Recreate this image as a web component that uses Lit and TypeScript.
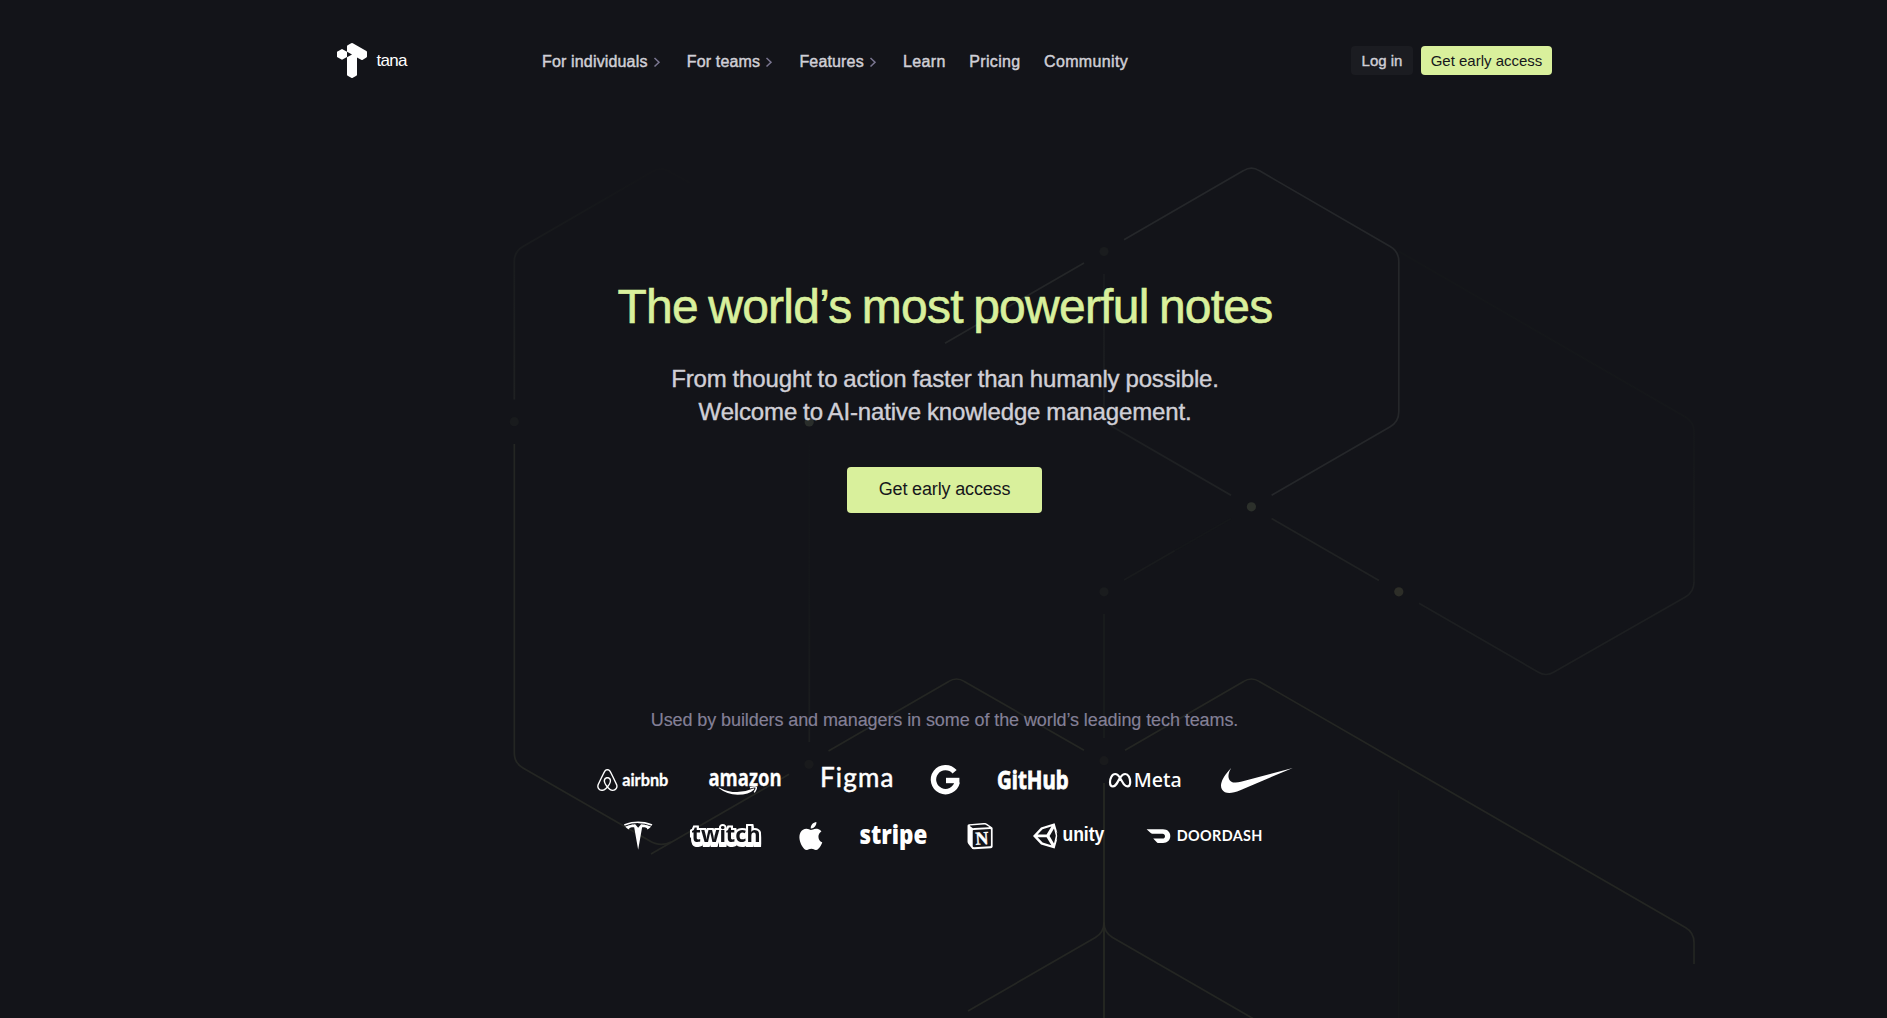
import { LitElement, html, css, svg } from "lit";
import { customElement } from "lit/decorators.js";

/** Faint honeycomb of lines and nodes behind the hero. */
@customElement("hex-backdrop")
class HexBackdrop extends LitElement {
  static styles = css`
    :host { position: absolute; inset: 0; display: block; overflow: hidden; pointer-events: none; }
    svg { display: block; width: 1887px; height: 1018px; }
    .l { fill: none; stroke-width: 1.7; }
  `;

  private lines: [string, string][] = [
    ["#25272a", "M1124 239.8L1243.6 170.6Q1251.4 165.8 1259.2 170.6L1390.2 246.5Q1398.8 251.5 1398.8 261.5V411.7Q1398.8 421.7 1390.2 426.7L1271.6 495.2"],
    ["#242628", "M1084 263L945 343.2"],
    ["#202223", "M1271.6 518.4L1379 580.4"],
    ["#1d1f21", "M1419 603.3L1538 672Q1546 677 1554 672L1685.4 597Q1694 592 1694 582"],
    ["#242623", "M1125 750.3L1243.6 681.4Q1251.4 676.6 1259.2 681.4L1685.4 927.5Q1694 932.5 1694 942.5V964"],
    ["#242623", "M828.5 751L948.7 681.4Q956.5 676.6 964.3 681.4L1084 750.3"],
    ["#242623", "M514.3 444V753Q514.3 763 523 768L649 840.5Q660 847.5 671 842"],
    ["#242623", "M651 854L789 774.3"],
    ["#242623", "M968 1011L1095.4 937.5Q1104 932.5 1104 922.5"],
    ["#242623", "M1104 922.5Q1104 932.5 1112.6 937.5L1253 1018.5"],
    ["#282a24", "M1104 783V1018"],
    ["#1b1d1e", "M1104 614V738"],
    ["#191b1d", "M1124 580L1175 550.6"],
    ["#15171a", "M1175 550.6L1231 518.5"],
  ];

  private nodes: [number, number, string][] = [
    [1104, 251.5, "#1a1c1e"], [514.3, 421.7, "#191b1d"], [809.2, 422, "#2a2e2b"],
    [1251.4, 506.8, "#2c302b"], [1398.8, 591.8, "#2d2e28"], [1104, 591.8, "#1a1c1e"],
    [809, 764.3, "#191a1c"], [1104, 760.7, "#191a1c"],
  ];

  render() {
    return html`<svg viewBox="0 0 1887 1018">
      <defs>
        <linearGradient id="a" gradientUnits="userSpaceOnUse" x1="1104" y1="274" x2="1231" y2="495">
          <stop offset="0" stop-color="#191b1e"/><stop offset="1" stop-color="#202224"/>
        </linearGradient>
        <linearGradient id="b" gradientUnits="userSpaceOnUse" x1="514" y1="400" x2="670" y2="196">
          <stop offset="0" stop-color="#1f2122"/><stop offset=".85" stop-color="#15171a"/><stop offset="1" stop-color="#141519"/>
        </linearGradient>
        <linearGradient id="c" gradientUnits="userSpaceOnUse" x1="0" y1="578" x2="0" y2="251">
          <stop offset="0" stop-color="#1a1c1e"/><stop offset=".4" stop-color="#15171a"/><stop offset="1" stop-color="#141619"/>
        </linearGradient>
        <linearGradient id="d" gradientUnits="userSpaceOnUse" x1="0" y1="443" x2="0" y2="742">
          <stop offset="0" stop-color="#131519"/><stop offset=".5" stop-color="#15171a"/><stop offset="1" stop-color="#1c1e1f"/>
        </linearGradient>
      </defs>
      <path class="l" stroke="url(#c)" d="M1694 582V432Q1694 422 1685.4 417L1399 251.5"/>
      <path class="l" stroke="url(#a)" d="M1104 274V411.7Q1104 421.7 1112.6 426.7L1231 495.2"/>
      <path class="l" stroke="url(#b)" d="M514.3 399.5V261.5Q514.3 251.5 523 246.5L653 171.2Q661 166.4 669 171.2L690 183"/>
      <path class="l" stroke="url(#d)" d="M809.3 443V742"/>
      <path class="l" stroke="#15171a" d="M1398.8 790V1018"/>
      ${this.lines.map(([c, d]) => svg`<path class="l" stroke=${c} d=${d}></path>`)}
      ${this.nodes.map(([x, y, c]) => svg`<circle cx=${x} cy=${y} r="4.6" fill=${c}></circle>`)}
    </svg>`;
  }
}

@customElement("site-header")
class SiteHeader extends LitElement {
  static styles = css`
    :host { display: block; padding: 43px 0 0 334px; }
    .bar { display: flex; width: 1218px; height: 35px; font-family: "Liberation Sans", Arial, sans-serif; }
    .brand { display: flex; align-items: flex-start; width: 208px; color: #fff; }
    .mark { display: block; width: 30px; height: 35px; margin-left: 3px; }
    .name { font-size: 17px; line-height: 20px; letter-spacing: -0.7px; margin: 8px 0 0 9.5px; }
    nav { display: flex; gap: 24px; width: 809px; padding-top: 9px; }
    .item { display: flex; align-items: center; height: 19px; font-size: 16px; line-height: 19px;
      color: #d0cfd6; -webkit-text-stroke: 0.45px #d0cfd6; white-space: nowrap; letter-spacing: 0.16px; }
    .item.plain { letter-spacing: 0.36px; margin-right: -0.6px; }
    .chev { width: 8px; height: 10px; margin-left: 5px; margin-right: 2.2px; overflow: visible; }
    .actions { display: flex; gap: 8px; padding-top: 3px; }
    .btn { display: flex; align-items: center; justify-content: center; box-sizing: border-box; height: 29px;
      padding-bottom: 1px; border-radius: 4px; font-size: 15px; white-space: nowrap; }
    .ghost { width: 62px; background: #1b1c21; color: #d0cfd6; -webkit-text-stroke: 0.4px #d0cfd6; }
    .solid { width: 131px; background: #d9f09c; color: #16171b; }
  `;

  private items = [
    { label: "For individuals", more: true }, { label: "For teams", more: true },
    { label: "Features", more: true }, { label: "Learn", more: false },
    { label: "Pricing", more: false }, { label: "Community", more: false },
  ];

  render() {
    return html`<header class="bar">
      <div class="brand">
        <svg class="mark" viewBox="337 43 30 35" fill="#fff">
          <path d="M337 51.7L342 49L347 51.7V57L342 59.8L337 57Z"/>
          <path d="M347 46.2Q347 45.6 347.6 45.2L351.2 43.2Q352 42.8 352.8 43.2L366.4 51Q367 51.4 367 52V56.6Q367 57.3 366.4 57.6L362.8 59.7Q362 60.1 361.2 59.7L357 57.5V74.8Q357 75.4 356.4 75.8L352.8 77.8Q352 78.2 351.2 77.8L347.6 75.8Q347 75.4 347 74.8V57.3L352 54.5L347 51.7Z"/>
        </svg>
        <span class="name">tana</span>
      </div>
      <nav>
        ${this.items.map((i) => i.more
          ? html`<a class="item">${i.label}<svg class="chev" viewBox="0 0 8 10" fill="none" stroke="#7a7690" stroke-width="1.5"><path d="M1.5 1L6 5.2L1.5 9.5"/></svg></a>`
          : html`<a class="item plain">${i.label}</a>`)}
      </nav>
      <div class="actions">
        <a class="btn ghost">Log in</a>
        <a class="btn solid">Get early access</a>
      </div>
    </header>`;
  }
}

/** Customer logos. Every mark is drawn in one shared coordinate space and cropped by its view box. */
@customElement("logo-wall")
class LogoWall extends LitElement {
  static styles = css`
    :host { display: flex; flex-direction: column; align-items: center; gap: 26px; }
    .row { display: flex; gap: 40px; height: 30px; }
    svg { display: block; height: 30px; overflow: visible; fill: #fff; }
    .geo { font-family: Lato, sans-serif; }
    .open { font-family: "Open Sans", sans-serif; }
    .noto { font-family: "Noto Sans", sans-serif; }
    .sans { font-family: "Liberation Sans", sans-serif; }
    .serif { font-family: "Liberation Serif", serif; }
    .b { font-weight: 700; }
    .line { fill: none; stroke: #fff; }
    .twitch { font-weight: 700; font-size: 21.5px; }
    .block { stroke: #fff; stroke-width: 4; stroke-linejoin: miter; stroke-miterlimit: 2;
      paint-order: stroke; fill: #131419; filter: drop-shadow(0 1.4px 0 #fff) drop-shadow(0 2px 0 #fff); }
  `;

  private mark(x: number, y: number, w: number, body: unknown) {
    return html`<svg viewBox="${x} ${y} ${w} 30" width=${w}>${body}</svg>`;
  }

  render() {
    return html`
      <div class="row">
        ${this.mark(597, 765, 72, svg`
          <path transform="translate(596.4 769) scale(.917)" d="M12.001 18.275c-1.353-1.697-2.148-3.184-2.413-4.457-.263-1.027-.16-1.848.291-2.465.477-.71 1.188-1.056 2.121-1.056s1.643.345 2.12 1.063c.446.61.558 1.432.286 2.465-.291 1.298-1.085 2.785-2.412 4.458zm9.601 1.14c-.185 1.246-1.034 2.28-2.2 2.783-2.253.98-4.483-.583-6.392-2.704 3.157-3.951 3.74-7.028 2.385-9.018-.795-1.14-1.933-1.695-3.394-1.695-2.944 0-4.563 2.49-3.927 5.382.37 1.565 1.352 3.343 2.917 5.332-.98 1.085-1.91 1.856-2.732 2.333-.636.344-1.245.558-1.828.609-2.679.399-4.778-2.2-3.825-4.88.132-.345.395-.98.845-1.961l.025-.053c1.464-3.178 3.242-6.79 5.285-10.795l.053-.132.58-1.116c.45-.822.635-1.19 1.351-1.643.346-.21.77-.315 1.246-.315.954 0 1.698.558 2.016 1.007.158.239.345.557.582.953l.558 1.089.08.159c2.041 4.004 3.821 7.608 5.279 10.794l.026.025.533 1.22.318.764c.243.613.294 1.222.213 1.858zm1.22-2.39c-.186-.583-.505-1.271-.9-2.094v-.03c-1.889-4.006-3.642-7.608-5.307-10.844l-.111-.163C15.317 1.461 14.468 0 12.001 0c-2.44 0-3.476 1.695-4.535 3.898l-.081.16c-1.669 3.236-3.421 6.843-5.303 10.847v.053l-.559 1.22c-.21.504-.317.768-.345.847C-.172 20.74 2.611 24 5.98 24c.027 0 .132 0 .265-.027h.372c1.75-.213 3.554-1.325 5.384-3.317 1.829 1.989 3.635 3.104 5.382 3.317h.372c.133.027.239.027.265.027 3.37.003 6.152-3.261 4.802-6.975z"></path>
          <text class="geo b" x="622.2" y="785.6" font-size="16.5" stroke="#fff" stroke-width=".3" textLength="46.2" lengthAdjust="spacingAndGlyphs">airbnb</text>`)}
        ${this.mark(709, 765, 72, svg`
          <text class="open b" x="708.4" y="786" font-size="23" stroke="#fff" stroke-width=".3" textLength="73.2" lengthAdjust="spacingAndGlyphs">amazon</text>
          <path d="M719 787.4Q735.5 796.2 753.4 788.6Q754.8 788.2 754.2 789.4Q749 794.6 737.6 794.8Q727 794.4 718.6 787.9Z"></path>
          <path class="line" stroke-width="1.4" d="M750 787.8Q755.6 786.4 756.3 787.4Q756.7 789 754.2 792.4"></path>`)}
        ${this.mark(821, 765, 72, svg`
          <text class="geo" x="820" y="787.3" font-size="26" stroke="#fff" stroke-width=".5" textLength="73.4" lengthAdjust="spacing">Figma</text>`)}
        ${this.mark(933, 765, 25, svg`
          <path class="line" stroke-width="5.4" d="M954.6 771.8A12 12 0 1 0 957.2 782.2"></path>
          <rect x="946" y="777.8" width="13.4" height="5.4"></rect>`)}
        ${this.mark(998, 765, 71, svg`
          <text class="noto b" x="997" y="789" font-size="25" stroke="#fff" stroke-width=".8" textLength="71.6" lengthAdjust="spacingAndGlyphs">GitHub</text>`)}
        ${this.mark(1109, 765, 72, svg`
          <path class="line" stroke-width="2.2" stroke-linejoin="round" d="M1120 777.8C1122 774.8 1123.6 774 1125.2 774C1128.3 774 1130.2 778 1130.2 782C1130.2 785 1129.3 786.4 1127.4 786.4C1124.8 786.4 1123.7 784.3 1120 777.8C1118.3 775 1117 774 1115.2 774C1112 774 1110 778.4 1110 782.2C1110 784.9 1111.1 786.4 1113 786.4C1115.5 786.4 1117 783.6 1120 777.8Z"></path>
          <text class="noto" x="1133.8" y="787" font-size="19.5" font-weight="500" textLength="48" lengthAdjust="spacingAndGlyphs">Meta</text>`)}
        ${this.mark(1221, 765, 72, svg`
          <path transform="translate(1221 744.6) scale(2.99)" d="M24 7.8L6.442 15.276c-1.456.616-2.679.925-3.668.925-1.12 0-1.933-.392-2.437-1.177-.317-.504-.41-1.143-.28-1.918.13-.775.476-1.6 1.036-2.478.467-.71 1.232-1.643 2.297-2.8a6.122 6.122 0 00-.784 1.848c-.28 1.195-.028 2.072.756 2.632.373.261.886.392 1.54.392.522 0 1.11-.084 1.764-.252L24 7.8z"></path>`)}
      </div>
      <div class="row">
        ${this.mark(626, 821, 24, svg`
          <path transform="translate(624 821.4) scale(1.18)" d="M12 5.362l2.475-3.026s4.245.09 8.471 2.054c-1.082 1.636-3.231 2.438-3.231 2.438-.146-1.439-1.154-1.79-4.354-1.79L12 24 8.619 5.034c-3.18 0-4.188.354-4.335 1.792 0 0-2.146-.795-3.229-2.43C5.28 2.431 9.525 2.34 9.525 2.34L12 5.362l-.004.002H12v-.002zm0-3.899c3.415-.03 7.326.528 11.328 2.28.535-.968.672-1.395.672-1.395C19.625.612 15.528.015 12 0 8.472.015 4.375.61 0 2.349c0 0 .195.525.672 1.396C4.674 1.989 8.585 1.435 12 1.46v.003z"></path>`)}
        ${this.mark(690, 821, 72, svg`
          <text class="noto twitch block" x="691.5" y="842.4" textLength="69" lengthAdjust="spacingAndGlyphs">twitch</text>`)}
        ${this.mark(802, 821, 18, svg`
          <path transform="translate(796.8 822) scale(1.167)" d="M12.152 6.896c-.948 0-2.415-1.078-3.96-1.04-2.04.027-3.91 1.183-4.961 3.014-2.117 3.675-.546 9.103 1.519 12.09 1.013 1.454 2.208 3.09 3.792 3.039 1.52-.065 2.09-.987 3.935-.987 1.831 0 2.35.987 3.96.948 1.637-.026 2.676-1.48 3.676-2.948 1.156-1.688 1.636-3.325 1.662-3.415-.039-.013-3.182-1.221-3.22-4.857-.026-3.04 2.48-4.494 2.597-4.559-1.429-2.09-3.623-2.324-4.39-2.376-2-.156-3.675 1.09-4.61 1.09zM15.53 3.83c.843-1.012 1.4-2.427 1.245-3.83-1.207.052-2.662.805-3.532 1.818-.78.896-1.454 2.338-1.273 3.714 1.338.104 2.715-.688 3.559-1.701"></path>`)}
        ${this.mark(860, 821, 67, svg`
          <text class="open" font-weight="800" x="859.4" y="843.8" font-size="27" textLength="68" lengthAdjust="spacingAndGlyphs">stripe</text>`)}
        ${this.mark(967, 821, 26, svg`
          <path fill-rule="evenodd" transform="translate(967 823) scale(1.09)" d="M4.459 4.208c.746.606 1.026.56 2.428.466l13.215-.793c.28 0 .047-.28-.046-.326L17.86 1.968c-.42-.326-.981-.7-2.055-.607L3.01 2.295c-.466.046-.56.28-.374.466zm.793 3.08v13.904c0 .747.373 1.027 1.214.98l14.523-.84c.841-.046.935-.56.935-1.167V6.354c0-.606-.233-.933-.748-.887l-15.177.887c-.56.047-.747.327-.747.933zM1.936 1.035l13.31-.98c1.634-.14 2.055-.047 3.082.7l4.249 2.986c.7.513.934.653.934 1.213v16.378c0 1.026-.373 1.634-1.68 1.726l-15.458.934c-.98.047-1.448-.093-1.962-.747l-3.129-4.06c-.56-.747-.793-1.306-.793-1.96V2.667c0-.839.374-1.54 1.447-1.632z"></path>
          <text class="serif b" x="975.3" y="844.4" font-size="18.5" stroke="#fff" stroke-width=".4" textLength="13" lengthAdjust="spacingAndGlyphs" transform="rotate(-3 982 838)">N</text>`)}
        ${this.mark(1033, 821, 72, svg`
          <path fill-rule="evenodd" d="M1033 836L1041 827.4L1054.6 823.2L1058.2 835.8L1054.6 848.6L1041 844.4ZM1037.6 834.6H1046.6L1051.4 826.6L1042.6 829.2ZM1037.6 837.2H1046.6L1051.4 845.2L1042.6 842.6ZM1049.6 836L1054 828.4L1055.8 835.8L1054 843.6Z"></path>
          <path fill="#131419" d="M1056.6 831.6L1059 834.4V837.4L1056.6 840.2L1057.2 836Z"></path>
          <text class="sans b" x="1062.4" y="841.3" font-size="19.5" textLength="42" lengthAdjust="spacingAndGlyphs">unity</text>`)}
        ${this.mark(1145, 821, 119, svg`
          <path d="M1146.6 829.2H1163C1167.5 829.2 1170.3 832 1170.3 836S1167.4 843 1163 843H1158.6Q1157.6 843 1157 842.4L1153.2 838.6H1162.6C1164 838.6 1165 837.6 1165 836.2S1164 833.8 1162.6 833.8H1152.4Q1151.4 833.8 1150.7 833.1Z"></path>
          <text class="geo b" x="1176.8" y="841.2" font-size="14.4" textLength="85.6" lengthAdjust="spacing">DOORDASH</text>`)}
      </div>`;
  }
}

@customElement("app-root")
class AppRoot extends LitElement {
  static styles = css`
    :host { display: block; position: relative; height: 1018px; overflow: hidden; background: #131419;
      font-family: "Liberation Sans", Arial, sans-serif; }
    .content { position: relative; }
    .hero { display: flex; flex-direction: column; align-items: center; padding-left: 3px; text-align: center; }
    h1 { margin: 201px 0 0; font-weight: 400; font-size: 48px; line-height: 56px; letter-spacing: -0.76px; word-spacing: -2.2px;
      color: #d9f09c; -webkit-text-stroke: 0.6px #d9f09c; white-space: nowrap; }
    .sub { margin: 27px 0 0; font-size: 24px; line-height: 33px; letter-spacing: -0.15px; word-spacing: -0.5px; color: #d0cfd6;
      -webkit-text-stroke: 0.4px #d0cfd6; white-space: nowrap; }
    .cta { display: flex; align-items: center; justify-content: center; box-sizing: border-box; width: 195px; height: 46px;
      margin: 39px 1px 0 0; padding-bottom: 1px; border-radius: 4px; background: #d9f09c; color: #16171b; font-size: 18px; letter-spacing: -0.15px; }
    .used { margin: 196px 1px 0 0; font-size: 18px; line-height: 22px; letter-spacing: -0.09px; color: #848097;
      -webkit-text-stroke: 0.15px #848097; white-space: nowrap; }
    logo-wall { margin-top: 34px; }
  `;

  render() {
    return html`
      <hex-backdrop></hex-backdrop>
      <div class="content">
        <site-header></site-header>
        <main class="hero">
          <h1>The world’s most powerful notes</h1>
          <p class="sub">From thought to action faster than humanly possible.<br>Welcome to AI-native knowledge management.</p>
          <a class="cta">Get early access</a>
          <p class="used">Used by builders and managers in some of the world’s leading tech teams.</p>
          <logo-wall></logo-wall>
        </main>
      </div>`;
  }
}
